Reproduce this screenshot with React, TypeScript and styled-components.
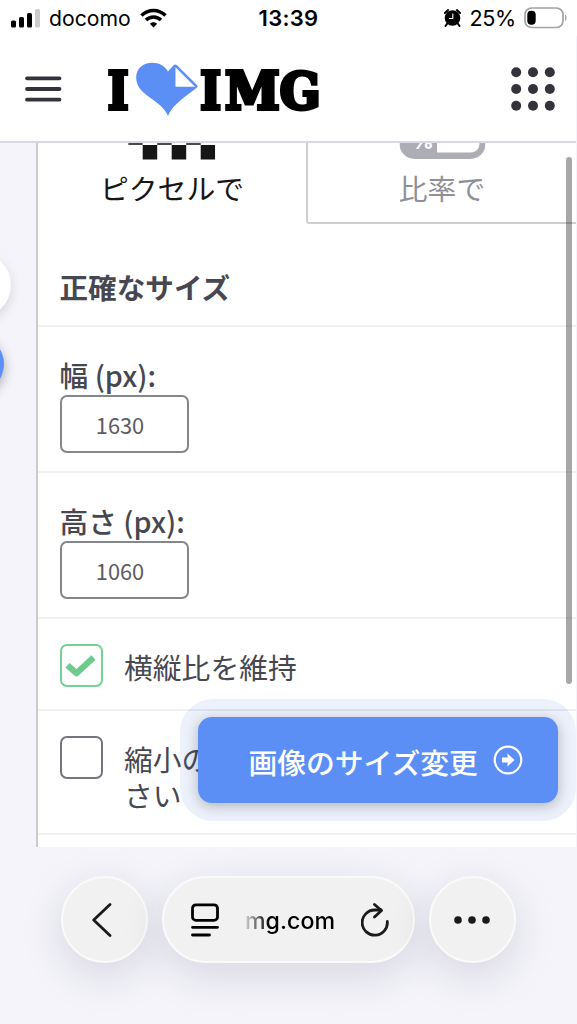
import React from "react";
import styled, { createGlobalStyle } from "styled-components";

const jp = `"Noto Sans CJK JP", "Noto Sans", sans-serif`;
const ui = `Inter, "Liberation Sans", sans-serif`;

const Global = createGlobalStyle`
  * { box-sizing: border-box; }
  body { margin: 0; background: #f4f4fa; font-family: ${jp}; color: #47474f; }
  svg { display: block; flex: none; }
`;

const Page = styled.div`
  position: relative;
  width: 577px;
  height: 1024px;
  overflow: hidden;
  display: flex;
  flex-direction: column;
`;

const StatusBar = styled.div`
  height: 36px;
  background: #fff;
  display: grid;
  grid-template-columns: 1fr auto 1fr;
  align-items: center;
  padding: 0 10px 0 10px;
  color: #000;
  font-family: ${ui};
`;

const StatusGroup = styled.div<{ $end?: boolean }>`
  display: flex;
  align-items: center;
  justify-content: ${(p) => (p.$end ? "flex-end" : "flex-start")};
`;

const Carrier = styled.span`
  font-size: 21.2px;
  line-height: 36px;
  margin: 0 9px 0 8px;
`;

const Clock = styled.span`
  font-size: 22px;
  font-weight: 600;
  line-height: 36px;
  letter-spacing: 0.3px;
`;

const Percent = styled.span`
  font-size: 21.6px;
  line-height: 36px;
  margin: 0 8px 0 8px;
  letter-spacing: -0.3px;
`;

const Header = styled.header`
  height: 107px;
  width: 576px;
  background: #fff;
  border-bottom: 2px solid #d9d9e2;
  display: flex;
  align-items: center;
  padding: 1px 21px 0 25px;
`;

const Logo = styled.div`
  margin-left: 42px;
  flex: 1;
`;

const Main = styled.main`
  height: 704px;
  width: 576px;
  display: flex;
  overflow: hidden;
`;

const Gutter = styled.aside`
  position: relative;
  width: 36px;
  flex: none;
`;

const FloatingDot = styled.div<{ $size: number; $x: number; $y: number; $color: string }>`
  position: absolute;
  left: ${(p) => p.$x}px;
  top: ${(p) => p.$y}px;
  width: ${(p) => p.$size}px;
  height: ${(p) => p.$size}px;
  border-radius: 50%;
  background: ${(p) => p.$color};
  box-shadow: 0 4px 12px rgba(0, 0, 0, ${(p) => (p.$color === "#fff" ? 0.13 : 0.32)});
`;

const Panel = styled.section`
  flex: 1;
  background: #fff;
  border-left: 2px solid #cbcbcb;
`;

const Tabs = styled.div`
  height: 81px;
  display: flex;
`;

const Tab = styled.div<{ $active?: boolean }>`
  width: ${(p) => (p.$active ? 268 : 270)}px;
  display: flex;
  flex-direction: column;
  align-items: center;
  font-size: 28.8px;
  line-height: 42px;
  color: ${(p) => (p.$active ? "#161616" : "#8f8f98")};
  ${(p) => !p.$active && "border-left: 2px solid #cfcfcf; border-bottom: 2px solid #cfcfcf; border-bottom-left-radius: 3px;"}
`;

const TabIcon = styled.div<{ $nudge: number }>`
  height: 24px;
  transform: translateX(${(p) => p.$nudge}px);
`;

const Row = styled.div<{ $h: number }>`
  height: ${(p) => p.$h}px;
  border-bottom: 2px solid #efeff6;
  padding-left: 21.5px;
`;

const Title = styled.h2`
  margin: 0;
  padding-top: 42px;
  font-size: 28.6px;
  line-height: 42px;
  font-weight: 700;
`;

const Label = styled.label`
  display: block;
  padding-top: 28px;
  margin-bottom: 1px;
  font-size: 28.7px;
  line-height: 39px;
  font-weight: 500;
`;

const Field = styled.div`
  width: 129px;
  height: 58px;
  border: 2px solid #85858c;
  border-radius: 7px;
  padding-right: 8px;
  display: flex;
  align-items: center;
  justify-content: center;
  font-size: 21.8px;
  color: #5c5c63;
`;

const CheckRow = styled(Row)`
  display: flex;
  gap: 21.5px;
  padding-top: 25px;
`;

const CheckBox = styled.div<{ $on?: boolean }>`
  width: 43px;
  height: 43px;
  flex: none;
  border: 2px solid ${(p) => (p.$on ? "#76d194" : "#75757d")};
  border-radius: 7px;
  display: flex;
  align-items: center;
  justify-content: center;
`;

const CheckText = styled.div`
  font-size: 28.8px;
  line-height: 36px;
  padding-top: 5px;
`;

const Scrollbar = styled.div`
  position: absolute;
  left: 566px;
  top: 157px;
  width: 6px;
  height: 527px;
  border-radius: 3px;
  background: rgba(0, 0, 0, 0.34);
`;

const Halo = styled.div`
  position: absolute;
  left: 180px;
  top: 699px;
  width: 396px;
  height: 122px;
  border-radius: 33px;
  padding: 18px;
  background: rgba(80, 128, 215, 0.11);
`;

const Action = styled.button`
  width: 360px;
  height: 86px;
  border: 0;
  border-radius: 14px;
  background: #5b8ff6;
  box-shadow: 0 3px 14px rgba(0, 0, 0, 0.26);
  color: #fff;
  font-family: ${jp};
  font-size: 28.8px;
  line-height: 42px;
  font-weight: 500;
  display: flex;
  align-items: center;
  justify-content: flex-start;
  gap: 14.6px;
  padding: 3px 0 0 50.4px;
  svg { margin-top: -3px; }
`;

const BrowserBar = styled.nav`
  flex: 1;
  display: flex;
  align-items: flex-start;
  gap: 14px;
  padding: 29px 0 0 61px;
`;

const Glass = styled.div<{ $w: number }>`
  width: ${(p) => p.$w}px;
  height: 87px;
  border-radius: 44px;
  border: 2px solid #fafafb;
  background: #f1f1f1;
  box-shadow: 0 12px 44px rgba(40, 35, 65, 0.14);
  display: flex;
  align-items: center;
  justify-content: center;
`;

const BackGlass = styled(Glass)`
  padding-right: 5px;
`;

const AddressGlass = styled(Glass)`
  padding-left: 3px;
`;

const MoreGlass = styled(Glass)`
  padding-right: 2px;
`;

const Address = styled.span`
  font-family: ${ui};
  font-size: 23.2px;
  font-weight: 500;
  line-height: 36px;
  margin: 2px 26px 0 26px;
  background: linear-gradient(90deg, rgba(0, 0, 0, 0.12), #000 24px);
  background-clip: text;
  -webkit-background-clip: text;
  color: transparent;
`;

const Signal = () => (
  <svg width="31" height="20" viewBox="0 0 31 20">
    <rect x="1" y="12.500" width="5" height="7" rx="1.6" />
    <rect x="9" y="9" width="5" height="10.5" rx="1.6" />
    <rect x="17" y="5" width="5" height="14.5" rx="1.6" />
    <rect x="25" y="1" width="5" height="18.5" rx="1.6" fill="#ccc" />
  </svg>
);

const Wifi = () => (
  <svg width="27" height="20" viewBox="0 0 27 20" fill="none" stroke="#000" strokeWidth="3.5">
    <path d="M1.5 7.6C8.2.8 18.8.8 25.5 7.6" />
    <path d="M6 12.1C10.2 8 16.8 8 21 12.1" />
    <path d="M9.8 15.7C11.8 13.6 15.2 13.6 17.2 15.7L13.5 19.5Z" fill="#000" stroke="none" />
  </svg>
);

const Alarm = () => (
  <svg width="17" height="18" viewBox="0 0 17 18">
    <circle cx="8.5" cy="9" r="7.8" />
    <path d="M.9 4 4.1 1.100M16.1 4 12.9 1.100M3.2 14.6 1.5 17M13.8 14.6 15.5 17" stroke="#000" strokeWidth="2" strokeLinecap="round" />
    <path d="M8.8 4.5V9.5H5" stroke="#fff" strokeWidth="1.1" fill="none" />
  </svg>
);

const Battery = () => (
  <svg width="43" height="22" viewBox="0 0 43 22">
    <rect x="1" y="1" width="38" height="19.500" rx="6.5" fill="none" stroke="#a2a2a2" strokeWidth="1.7" />
    <rect x="3.3" y="3.8" width="8.4" height="14" rx="4" />
    <path d="M41 7.5C43 8.5 43 13 41 14Z" fill="#a2a2a2" />
  </svg>
);

const LogoArt = () => (
  <svg width="222" height="70" viewBox="0 0 222 70">
    <g fontFamily='"DejaVu Serif", serif' fontWeight="700" fontSize="52" stroke="#000" strokeWidth="4">
      <text transform="translate(3.7 55) scale(.855 1)">I</text>
      <text transform="translate(96.2 55) scale(.855 1)">I</text>
      <text transform="translate(120.9 55) scale(.95 1)">M</text>
      <text transform="translate(175.8 54.700) scale(.92 .98)">G</text>
    </g>
    <path d="M64 62C60.500 52 48 46 39 38C28 28 30 9.200 48 8.700C55 8.700 61 12 64 17.500L69.500 11.300Q71.300 9.500 73 11.300L93 31Q94.500 32.600 92.500 34C82 42 68 51 64 62Z" fill="#5b8ff6" />
    <path d="M71.500 13.200V32.700H91Z" fill="#fff" />
  </svg>
);

const Check = () => (
  <svg width="32" height="24" viewBox="0 0 32 24">
    <path d="M2.500 11.200 11.500 19.200 28.500 3.500" fill="none" stroke="#6ccb8c" strokeWidth="6.2" strokeLinejoin="round" />
  </svg>
);

export default function App() {
  return (
    <Page>
      <Global />
      <StatusBar>
        <StatusGroup>
          <Signal />
          <Carrier>docomo</Carrier>
          <Wifi />
        </StatusGroup>
        <Clock>13:39</Clock>
        <StatusGroup $end>
          <Alarm />
          <Percent>25%</Percent>
          <Battery />
        </StatusGroup>
      </StatusBar>
      <Header>
        <svg width="37" height="26" viewBox="0 0 37 26" stroke="#33333b" strokeWidth="3.800" strokeLinecap="round">
          <path d="M2 2.300H34.500M2 13H34.500M2 23.700H34.500" />
        </svg>
        <Logo>
          <LogoArt />
        </Logo>
        <svg width="44" height="44" viewBox="0 0 44 44" fill="#33333b">
          {[5.2, 22, 38.8].map((y) => [5.2, 22, 38.8].map((x) => <circle key={`${x}-${y}`} cx={x} cy={y} r="5" />))}
        </svg>
      </Header>
      <Main>
        <Gutter>
          <FloatingDot $size={66} $x={-55.5} $y={109} $color="#fff" />
          <FloatingDot $size={56} $x={-52} $y={193} $color="#5b8ff6" />
        </Gutter>
        <Panel>
          <Tabs>
            <Tab $active>
              <TabIcon $nudge={-0.8}>
                <svg width="87" height="17" viewBox="0 0 87 17" fill="#161616">
                  {[0, 29, 58].map((x) => (
                    <React.Fragment key={x}>
                      <rect x={x} y="0" width="14.500" height="2" fill="#4a4a4a" />
                      <rect x={x + 14.5} y="2" width="14.500" height="14.500" />
                    </React.Fragment>
                  ))}
                </svg>
              </TabIcon>
              ピクセルで
            </Tab>
            <Tab>
              <TabIcon $nudge={0.5}>
                <svg width="86" height="17" viewBox="0 0 86 17">
                  <rect x="0" y="-29" width="86" height="45" rx="15" fill="#adadb6" />
                  <path d="M37.500-23H71Q80-23 80-14V1Q79 9.500 71 9.500H37.500Z" fill="#fff" />
                  <text x="12" y="5.600" fontFamily="Inter, sans-serif" fontWeight="700" fontSize="22" fill="#fff">%</text>
                </svg>
              </TabIcon>
              比率で
            </Tab>
          </Tabs>
          <Row $h={103}>
            <Title>正確なサイズ</Title>
          </Row>
          <Row $h={146}>
            <Label>幅 (px):</Label>
            <Field>1630</Field>
          </Row>
          <Row $h={146}>
            <Label>高さ (px):</Label>
            <Field>1060</Field>
          </Row>
          <CheckRow $h={92}>
            <CheckBox $on>
              <Check />
            </CheckBox>
            <CheckText>横縦比を維持</CheckText>
          </CheckRow>
          <CheckRow $h={124}>
            <CheckBox />
            <CheckText>
              縮小の
              <br />
              さい
            </CheckText>
          </CheckRow>
        </Panel>
      </Main>
      <BrowserBar>
        <BackGlass $w={87}>
          <svg width="20" height="36" viewBox="0 0 20 36" fill="none" stroke="#1a1a1a" strokeWidth="2.800" strokeLinecap="round" strokeLinejoin="round">
            <path d="M18 2.500 1.700 18 18 33.500" />
          </svg>
        </BackGlass>
        <AddressGlass $w={253}>
          <svg width="28" height="34" viewBox="0 0 28 34" fill="none" stroke="#000" strokeWidth="2.800" strokeLinecap="round">
            <rect x="1.500" y="1.800" width="25" height="15.600" rx="3.500" />
            <path d="M1.500 24.300H26.500M1.500 32H18.500" />
          </svg>
          <Address>mg.com</Address>
          <svg width="28" height="34" viewBox="0 0 28 34" fill="none" stroke="#1a1a1a" strokeWidth="2.800" strokeLinecap="round" strokeLinejoin="round">
            <path d="M26.300 18.500A12.600 12.600 0 1 1 13.700 7H20" />
            <path d="M13.500 1.500 20.500 7.500 13.500 14" />
          </svg>
        </AddressGlass>
        <MoreGlass $w={87}>
          <svg width="36" height="8" viewBox="0 0 36 8" fill="#1a1a1a">
            <circle cx="4" cy="4" r="3.800" />
            <circle cx="18" cy="4" r="3.800" />
            <circle cx="32" cy="4" r="3.800" />
          </svg>
        </MoreGlass>
      </BrowserBar>
      <Scrollbar />
      <Halo>
        <Action>
          画像のサイズ変更
          <svg width="30" height="30" viewBox="0 0 30 30" fill="none" stroke="#fff">
            <circle cx="15" cy="15" r="13.300" strokeWidth="2.200" />
            <path d="M9 12.600H14.500V8.500L21.500 15 14.500 21.500V17.400H9Z" fill="#fff" stroke="none" />
          </svg>
        </Action>
      </Halo>
    </Page>
  );
}
